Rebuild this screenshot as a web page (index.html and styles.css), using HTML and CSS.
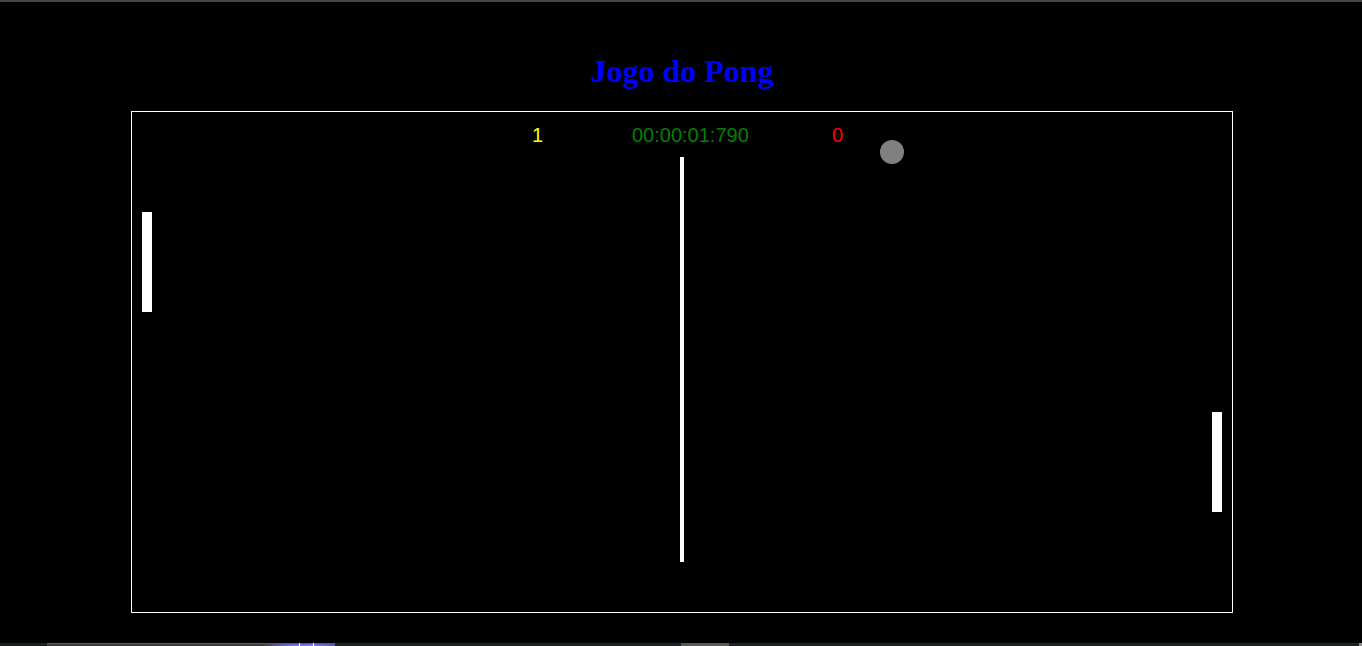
FILE: index.html
```html
<!DOCTYPE html>
<html lang="pt">
<head>
<meta charset="utf-8">
<title>Jogo do Pong</title>
<link rel="stylesheet" href="styles.css">
</head>
<body>
<div class="topbar"></div>
<main class="page">
  <h1 class="title">Jogo do Pong</h1>
  <div class="game">
    <span class="score score-left">1</span>
    <span class="timer">00:00:01:790</span>
    <span class="score score-right">0</span>
    <div class="ball"></div>
    <div class="net"></div>
    <div class="paddle paddle-left"></div>
    <div class="paddle paddle-right"></div>
  </div>
</main>
<div class="taskbar">
  <div class="seg seg-a"></div>
  <div class="seg seg-b"><i class="tick t1"></i><i class="tick t2"></i></div>
  <div class="seg seg-c"></div>
  <div class="seg seg-d"></div>
  <div class="seg seg-e"></div>
  <div class="seg seg-f"></div>
</div>
</body>
</html>
```
FILE: styles.css
```css
html, body {
  margin: 0;
  padding: 0;
  background: #000;
}
body {
  width: 1362px;
  height: 646px;
  overflow: hidden;
  display: flex;
  flex-direction: column;
}
.topbar {
  height: 2px;
  background: #474747;
  flex: none;
}
.page {
  flex: 1;
  display: flex;
  flex-direction: column;
  align-items: center;
  padding-top: 51px;
  padding-left: 2px;
}
.title {
  margin: 0 0 22px 0;
  font-family: "Liberation Serif", "Times New Roman", serif;
  font-weight: bold;
  font-size: 32px;
  line-height: 36px;
  color: #0000ff;
}
.game {
  position: relative;
  width: 1100px;
  height: 500px;
  border: 1px solid #fff;
  background: #000;
  flex: none;
}
.score, .timer {
  position: absolute;
  top: 13px;
  font-family: "Liberation Sans", Arial, sans-serif;
  font-size: 20px;
  line-height: 20px;
  white-space: nowrap;
}
.score-left { left: 400px; color: #ffff00; }
.timer { left: 500px; color: #008000; }
.score-right { left: 700px; color: #ff0000; }
.ball {
  position: absolute;
  left: 748px;
  top: 28px;
  width: 24px;
  height: 24px;
  border-radius: 50%;
  background: #808080;
}
.net {
  position: absolute;
  left: 548px;
  top: 45px;
  width: 4px;
  height: 405px;
  background: #fff;
}
.paddle {
  position: absolute;
  width: 10px;
  height: 100px;
  background: #fff;
}
.paddle-left { left: 10px; top: 100px; }
.paddle-right { left: 1080px; top: 300px; }
.taskbar {
  height: 3px;
  flex: none;
  display: flex;
  background: #1d2025;
}
.seg { height: 3px; }
.seg-a { width: 47px; background: #1c1f24; }
.seg-b {
  position: relative;
  width: 288px;
  background: linear-gradient(to right, #3c3c3c 0%, #3c3c3c 75%, #6a6ad8 84%, #7676ee 92%, #5656a8 100%);
  border-top: 1px solid #5a5a5a;
  height: 2px;
}
.tick {
  position: absolute;
  top: -1px;
  width: 1px;
  height: 3px;
  background: #fff;
}
.t1 { left: 252px; }
.t2 { left: 266px; }
.seg-c { width: 346px; background: #1e2126; }
.seg-d { width: 48px; background: #585858; }
.seg-e { width: 630px; background: #1e2126; }
.seg-f { width: 3px; background: #8a8a8a; }
```
